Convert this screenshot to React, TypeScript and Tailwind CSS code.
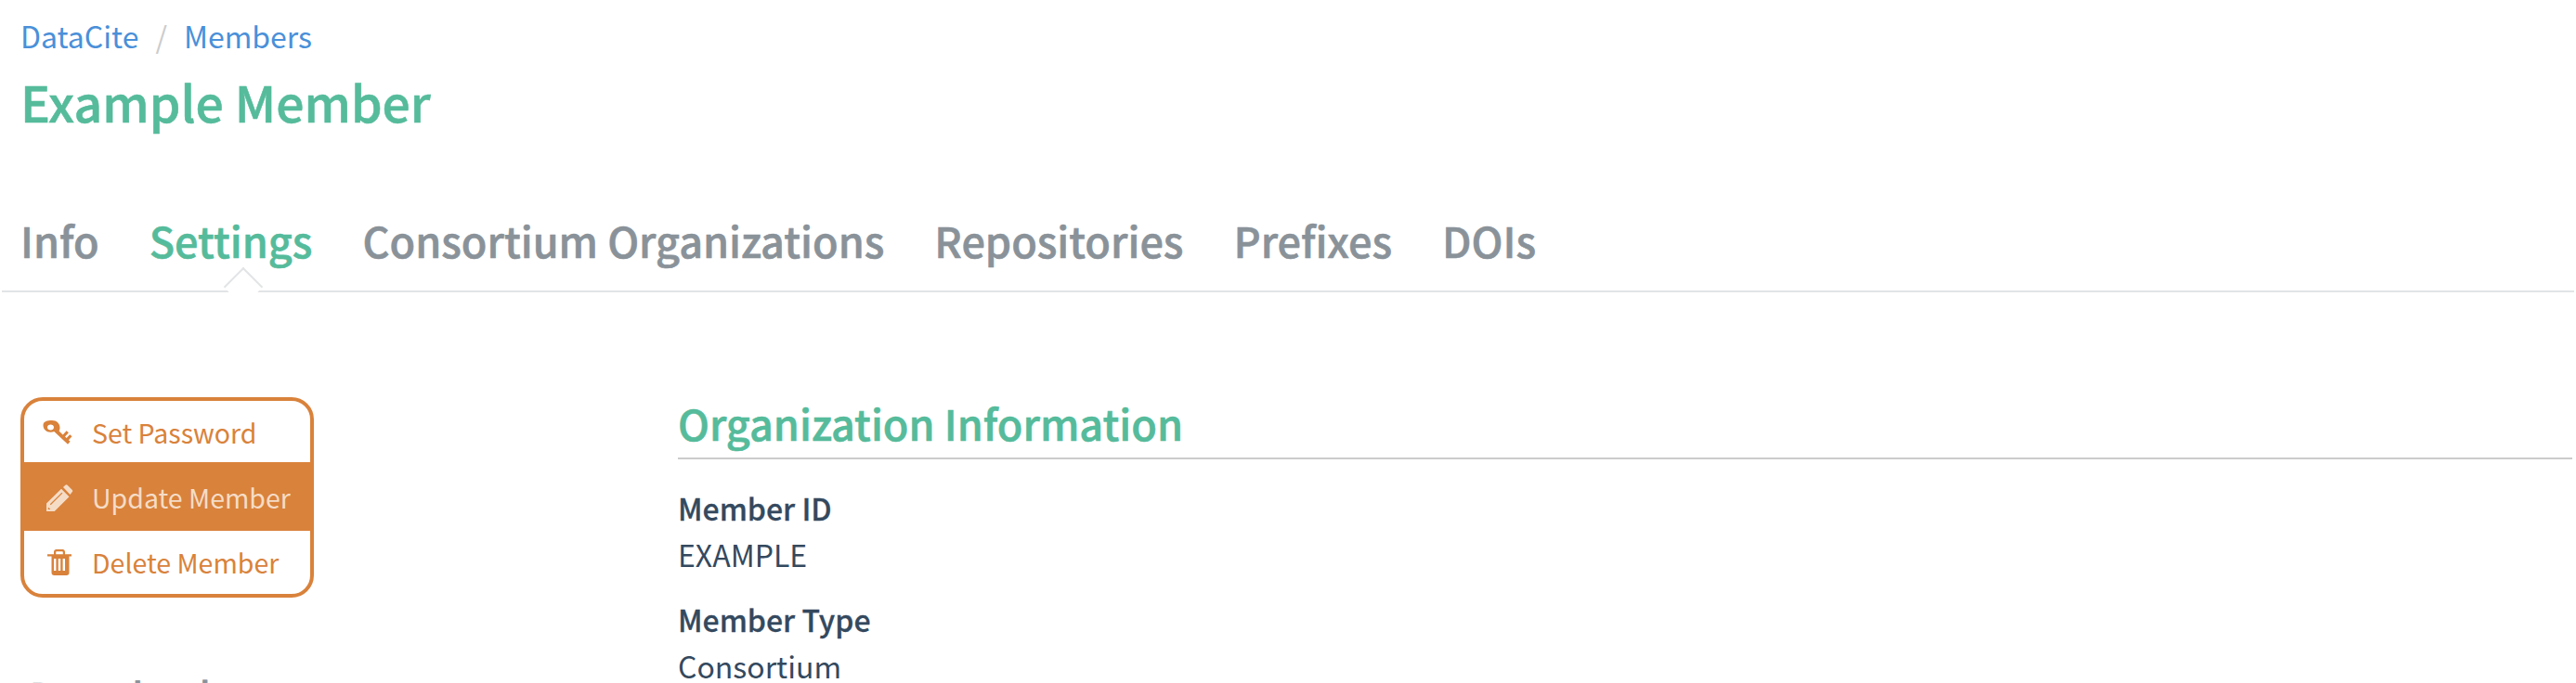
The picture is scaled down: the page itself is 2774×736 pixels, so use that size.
const TABS = ['Info', 'Settings', 'Consortium Organizations', 'Repositories', 'Prefixes', 'DOIs'];

const FONT = { fontFamily: '"Noto Sans CJK SC", "Noto Sans", sans-serif' };

function KeyIcon() {
  return (
    <svg viewBox="8 9 36 36" className="size-9 shrink-0 fill-current">
      <path
        fillRule="evenodd"
        d="M20 15c5 0 8.500 3.500 8.500 8 0 1.300-.3 2.500-.9 3.600l4.100 3.900 3.900-4.300 2.300 2.100-3.900 4.300 1.600 1.500 3.600-3.900 2.300 2.100-3.600 3.900 1.700 1.600-2.600 2.900-14.700-13.800a9.500 9.500 0 0 1-3.800.8c-4.700 0-8-3.200-8-7.500S15.300 15 20 15Zm-1.500 4.500c-1.900 0-3.500 1.300-3.500 3s1.600 3 3.500 3 3.500-1.300 3.500-3-1.600-3-3.500-3Z"
      />
    </svg>
  );
}

function PencilIcon() {
  return (
    <svg viewBox="8 9 36 36" className="size-9 shrink-0 fill-current">
      <path
        fillRule="evenodd"
        d="M14 34.500 30 18.700l8.500 8.600L22.700 43H14v-8.500Zm3.800.8 12.700-12.600.9.900-12.700 12.600-.9-.9Zm-1.900 3.200-.1 2.600 2.600-.1-2.500-2.500Z"
      />
      <path d="m32 17 2.400-2.300a1.600 1.600 0 0 1 2.200 0l5.200 5.200a1.600 1.600 0 0 1 0 2.200L39.500 25 32 17Z" />
    </svg>
  );
}

function TrashIcon() {
  return (
    <svg viewBox="8 10 36 36" className="size-9 shrink-0 fill-current">
      <path
        fillRule="evenodd"
        d="M22 19.200v-2.400c0-1.500 1.100-2.800 2.600-2.800h6.800c1.500 0 2.600 1.300 2.600 2.800v2.400h7v2.300h-2.500V39a3 3 0 0 1-3 3h-13a3 3 0 0 1-3-3V21.500H15v-2.300h7Zm2.200 0h7.600v-2c0-.6-.4-1-1-1h-5.600c-.6 0-1 .4-1 1v2ZM22 24v13h2.400V24H22Zm4.800 0v13h2.400V24h-2.400Zm4.800 0v13H34V24h-2.400Z"
      />
    </svg>
  );
}

export default function App() {
  return (
    <div className="h-[736px] overflow-hidden bg-white text-[#34495e]" style={FONT}>
      <div className="px-[22px] pt-[20px]">
        <div className="flex gap-[18px] text-[32px] leading-[36px] text-[#4a90d9]">
          <span>DataCite</span>
          <span className="text-[#ccc]">/</span>
          <span>Members</span>
        </div>
        <h2 className="mt-[19px] text-[53.5px] font-medium leading-[68px] text-[#55bb9b] [-webkit-text-stroke:0.6px]">Example Member</h2>
      </div>
      <div className="relative mx-[2px] mt-[88px] flex gap-[54px] border-b-2 border-[#e2e4e6] px-[20px] pb-[26px] text-[45px] font-medium leading-[56px] text-[#8a9299] [-webkit-text-stroke:0.6px]">
        {TABS.map((t) => (
          <span key={t} className={t === 'Settings' ? 'text-[#55bb9b]' : ''}>{t}</span>
        ))}
        <span className="absolute -bottom-[11px] left-[245px] size-[30px] rotate-45 border-l-2 border-t-2 border-[#e2e4e6] bg-white" />
      </div>
      <div className="mt-[113px] flex pl-[22px] pr-1">
        <div className="w-[708px] shrink-0">
          <div className="w-[316px] overflow-hidden rounded-[24px] border-4 border-[#d9823b] text-[28.5px] leading-[36px] text-[#d9823b]">
            <div className="flex h-[66px] items-center gap-[19px] pl-[18px]"><KeyIcon /><span className="mt-[2px]">Set Password</span></div>
            <div className="flex h-[74px] items-center gap-[19px] bg-[#d9823b] pl-[18px] text-[#f5dcc6]"><PencilIcon /><span className="mt-[2px]">Update Member</span></div>
            <div className="flex h-[68px] items-center gap-[19px] pl-[18px]"><TrashIcon />Delete Member</div>
          </div>
          <div className="mt-[80px] px-[10px] text-[40px] font-medium leading-[48px] text-[#8a9299] [-webkit-text-stroke:0.6px]">Download</div>
        </div>
        <div className="flex-1">
          <h3 className="mt-[2px] border-b-2 border-[#ccc] pb-[11px] text-[45px] font-medium leading-[52px] text-[#55bb9b] [-webkit-text-stroke:0.6px]">Organization Information</h3>
          <div className="mt-[28px] text-[32px] font-medium leading-[48px] [-webkit-text-stroke:0.3px]">Member ID</div>
          <div className="mt-[2px] text-[32px] leading-[48px]">EXAMPLE</div>
          <div className="mt-[22px] text-[32px] font-medium leading-[48px] [-webkit-text-stroke:0.3px]">Member Type</div>
          <div className="mt-[2px] text-[32px] leading-[48px]">Consortium</div>
        </div>
      </div>
    </div>
  );
}
